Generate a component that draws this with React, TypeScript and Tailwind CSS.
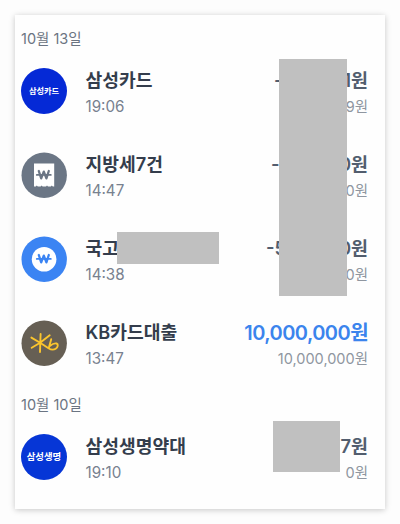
import React from "react";

interface Transaction {
  id: number;
  title: string;
  time: string;
  icon: React.ReactNode;
  amount: React.ReactNode;
  balance: string;
  income?: boolean;
  titleMask?: boolean;
}

interface DayGroup {
  date: string;
  items: Transaction[];
}

const WonMark = ({ className }: { className: string }) => (
  <g className={className} fill="none" strokeLinejoin="round" strokeLinecap="round">
    <path d="M17.8 19l2.4 7.4 2.6-6.8 2.6 6.8 2.4-7.4" strokeWidth="2.3" />
    <path d="M15.8 22.9h14" strokeWidth="1.8" />
  </g>
);

const TextIcon = ({ label, className }: { label: string; className: string }) => (
  <div className={`flex size-[46px] items-center justify-center rounded-full font-bold text-white ${className}`}>
    {label}
  </div>
);

const ReceiptIcon = () => (
  <svg className="size-[46px]" viewBox="0 0 46 46">
    <circle cx="23.2" cy="23.2" r="22.7" fill="#6b7685" />
    <path
      d="M13 11.6h20.2v22.8h-1.4l-1-1-1 1h-2.8l-1-1-1 1h-3.4l-1-1-1 1h-2.8l-1-1-1 1H13z"
      fill="#fff"
    />
    <WonMark className="stroke-[#6b7685]" />
  </svg>
);

const CoinIcon = () => (
  <svg className="size-[46px]" viewBox="0 0 46 46">
    <circle cx="23.2" cy="23.2" r="22.7" fill="#3b84f3" />
    <circle cx="23.1" cy="23.2" r="12.3" fill="#fff" />
    <WonMark className="stroke-[#3b84f3]" />
  </svg>
);

const KbIcon = () => (
  <svg className="size-[46px]" viewBox="0 0 46 46">
    <circle cx="23.2" cy="23.2" r="22.7" fill="#665f54" />
    <g fill="none" stroke="#fbc52d" strokeWidth="1.9" strokeLinecap="round" strokeLinejoin="round">
      <path d="M19.6 14l-.6 18M10.4 17.6l8.7 5.1 9.6-7.4M10.7 27.7l8.4-5" />
      <path d="M19.1 22.7l8.4 5.6c2.4 1.5 5.2 1.7 7.2.4 2.2-1.5 2.9-4.4.9-5.2-1.9-.6-4.3 .5-6.8 2.5M30.2 19.2l-2.4 8.8" />
    </g>
  </svg>
);

const groups: DayGroup[] = [
  {
    date: "10월 13일",
    items: [
      {
        id: 1,
        title: "삼성카드",
        time: "19:06",
        icon: <TextIcon label="삼성카드" className="bg-[#0529d6] text-[8.2px]" />,
        amount: (
          <span className="flex w-[94px] justify-between">
            <span>-</span>
            <span>1원</span>
          </span>
        ),
        balance: "9원",
      },
      {
        id: 2,
        title: "지방세7건",
        time: "14:47",
        icon: <ReceiptIcon />,
        amount: (
          <span className="flex w-[97px] justify-between">
            <span>-</span>
            <span>0원</span>
          </span>
        ),
        balance: "0원",
      },
      {
        id: 3,
        title: "국고",
        time: "14:38",
        icon: <CoinIcon />,
        amount: (
          <span className="flex w-[102px] justify-between">
            <span>-5</span>
            <span>0원</span>
          </span>
        ),
        balance: "0원",
        titleMask: true,
      },
      {
        id: 4,
        title: "KB카드대출",
        time: "13:47",
        icon: <KbIcon />,
        amount: "10,000,000원",
        balance: "10,000,000원",
        income: true,
      },
    ],
  },
  {
    date: "10월 10일",
    items: [
      {
        id: 5,
        title: "삼성생명약대",
        time: "19:10",
        icon: <TextIcon label="삼성생명" className="bg-[#0636d6] text-[9.4px]" />,
        amount: "7원",
        balance: "0원",
      },
    ],
  },
];

const TransactionRow = ({ item }: { item: Transaction }) => (
  <li className="flex h-[84px] items-start">
    <div className="mt-[18px] shrink-0">{item.icon}</div>
    <div className="relative ml-[18.5px] pt-[17px]">
      <p className="text-[18.2px] leading-[26px] font-semibold text-[#343d4c]">{item.title}</p>
      <p className="mt-px text-[15.2px] leading-[26px] text-[#78818f]">{item.time}</p>
      {item.titleMask && <div className="absolute top-[14px] left-[31.5px] h-8 w-[102px] bg-[#c0c0c0]" />}
    </div>
    <div className="ml-auto flex flex-col items-end pt-[17px]">
      <div
        className={
          item.income
            ? "pt-px text-[20px] leading-[26px] font-semibold tracking-[-0.55px] text-[#3b84ed]"
            : "pb-px text-[18.4px] leading-[26px] font-semibold text-[#525d6e]"
        }
      >
        {item.amount}
      </div>
      <p className="text-[14.5px] leading-[26px] text-[#8f96a0]">{item.balance}</p>
    </div>
  </li>
);

const App: React.FC = () => {
  return (
    <div className="h-[524px] w-[400px] bg-[#fdfdfd] px-[15px] pt-[15px] font-['Inter','Noto_Sans_CJK_KR',sans-serif]">
      <div className="relative h-[494px] bg-[#fefefe] pr-[17px] pl-[6px] shadow-[0_1px_6px_rgba(0,0,0,0.22)]">
        {groups.map((group, index) => (
          <section key={group.date}>
            <h2
              className={
                index === 0
                  ? "h-[35px] pt-[12px] text-[14.5px] leading-6 text-[#6b7482]"
                  : "h-[30px] pt-[7px] text-[14.5px] leading-6 text-[#6b7482]"
              }
            >
              {group.date}
            </h2>
            <ul>
              {group.items.map((item) => (
                <TransactionRow key={item.id} item={item} />
              ))}
            </ul>
          </section>
        ))}
        {/* redacted amounts */}
        <div className="absolute top-[44px] left-[264px] h-[237px] w-[68px] bg-[#c0c0c0]" />
        <div className="absolute top-[406px] left-[258px] h-[51px] w-[67px] bg-[#c0c0c0]" />
      </div>
    </div>
  );
};

export default App;
